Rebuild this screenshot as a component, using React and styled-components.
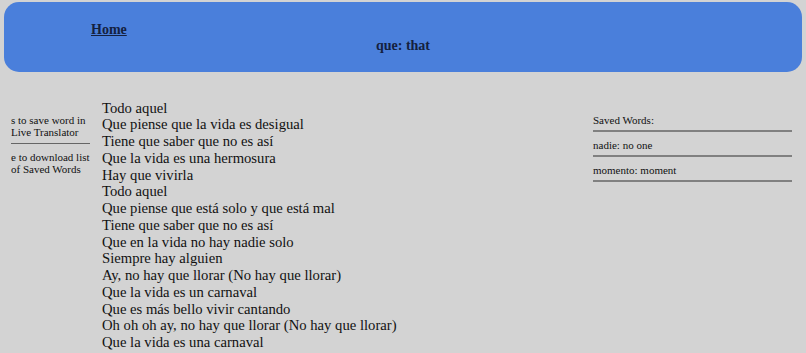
import React from "react";
import styled, { createGlobalStyle } from "styled-components";

const Global = createGlobalStyle`
  html, body { margin: 0; padding: 0; background: #d3d3d3; }
  body { font-family: "Liberation Serif", "Times New Roman", serif; color: #111; }
`;

const Header = styled.header`
  margin: 2px 4px 0;
  height: 70px;
  box-sizing: border-box;
  padding: 20px 0 0;
  background: #4a7fdb;
  border-radius: 15px;
  display: flex;
  flex-direction: column;
`;

const HomeLink = styled.a`
  align-self: flex-start;
  margin-left: 87px;
  font-size: 14px;
  font-weight: bold;
  line-height: 16px;
  color: #14213f;
  text-decoration: underline;
`;

const Title = styled.div`
  text-align: center;
  font-size: 14px;
  font-weight: bold;
  line-height: 16px;
  color: #14213f;
`;

const Main = styled.main`
  display: flex;
  align-items: flex-start;
  padding: 0 14px 0 11px;
`;

const Hints = styled.aside`
  width: 79px;
  flex: none;
  margin-top: 43px;
  font-size: 11px;
  line-height: 11.5px;
`;

const Hint = styled.p`
  margin: 0;
  white-space: nowrap;
  overflow: hidden;
`;

const Rule = styled.hr`
  margin: 5px 0 8px;
  border: none;
  border-top: 1px solid #666;
`;

const Lyrics = styled.div`
  flex: 1;
  margin: 27.5px 0 0 12px;
  font-size: 14.67px;
  line-height: 16.75px;
`;

const Line = styled.div`
  white-space: nowrap;
`;

const Saved = styled.aside`
  width: 199px;
  flex: none;
  margin-top: 35px;
  font-size: 11px;
`;

const SavedItem = styled.div`
  padding: 7px 0 3.5px;
  line-height: 12.5px;
  border-bottom: 2px solid #808080;
`;

const lyrics = [
  "Todo aquel",
  "Que piense que la vida es desigual",
  "Tiene que saber que no es así",
  "Que la vida es una hermosura",
  "Hay que vivirla",
  "Todo aquel",
  "Que piense que está solo y que está mal",
  "Tiene que saber que no es así",
  "Que en la vida no hay nadie solo",
  "Siempre hay alguien",
  "Ay, no hay que llorar (No hay que llorar)",
  "Que la vida es un carnaval",
  "Que es más bello vivir cantando",
  "Oh oh oh ay, no hay que llorar (No hay que llorar)",
  "Que la vida es una carnaval",
];

const saved = ["Saved Words:", "nadie: no one", "momento: moment"];

export default function App() {
  return (
    <>
      <Global />
      <Header>
        <HomeLink href="#">Home</HomeLink>
        <Title>que: that</Title>
      </Header>
      <Main>
        <Hints>
          <Hint>s to save word in</Hint>
          <Hint>Live Translator</Hint>
          <Rule />
          <Hint>e to download list</Hint>
          <Hint>of Saved Words</Hint>
        </Hints>
        <Lyrics>
          {lyrics.map((l, i) => (
            <Line key={i}>{l}</Line>
          ))}
        </Lyrics>
        <Saved>
          {saved.map((s) => (
            <SavedItem key={s}>{s}</SavedItem>
          ))}
        </Saved>
      </Main>
    </>
  );
}
